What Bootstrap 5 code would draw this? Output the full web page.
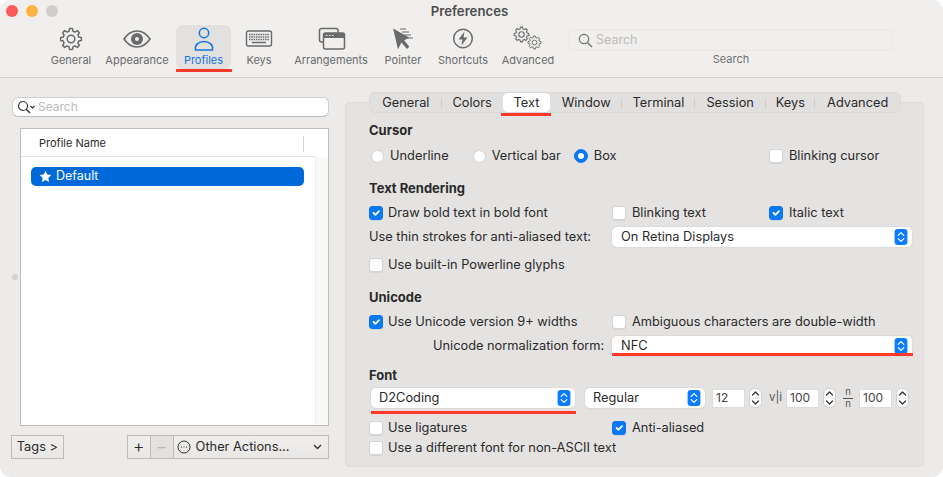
<!DOCTYPE html>
<html lang="en"><head><meta charset="utf-8"><title>Preferences</title>
<link rel="stylesheet" href="https://cdn.jsdelivr.net/npm/bootstrap@5.3.0/dist/css/bootstrap.min.css">
<style>
html,body{height:477px;overflow:hidden;background:#fff;}
body{font-family:Inter,"Liberation Sans",sans-serif;font-size:12.8px;color:#2a2a2a;line-height:1;}
.win{width:943px;height:477px;background:#ecebe9;border-radius:11px;overflow:hidden;}
.tbar{height:78px;background:#f0efed;border-bottom:1px solid #d2d1cf;}
.tophead{height:21px;}
.lights{width:70px;padding:5px 0 0 6px;gap:8px;}
.dot{width:12px;height:12px;border-radius:50%;display:block;}
.d1{background:#fb5b5c;}.d2{background:#fdb243;}.d3{background:#cfcecc;}
.wtitle{width:799px;text-align:center;font-weight:600;font-size:13.2px;color:#4c4c4c;padding-top:5px;}
.tools{padding-left:44px;margin-top:4px;}
.tool{height:44px;color:#6a6a6a;font-size:11px;position:relative;}
.tool svg{height:26px;width:30px;display:block;margin-top:1px;}
.tool span{margin-top:3px;white-space:nowrap;}
.t1{width:54px}.t2{width:78px}.t3{width:55px;background:#e2e1df;border-radius:6px;color:#1473e6;}.t4{width:56px}.t5{width:88px}.t6{width:56px}.t7{width:64px}.t8{width:66px}
.redmark{position:absolute;background:#fd3a2a;height:3px;}
.rm1{left:0;right:-1px;top:44px;}
.tsearch{margin-left:8px;width:324px;color:#707070;font-size:11px;margin-top:4px;}
.tfield{height:22px;border:1px solid #e7e6e4;border-radius:5px;width:100%;padding-left:8px;gap:3px;color:#bdbcbb;font-size:12.5px;flex:none;}
.tsearch>span{margin-top:3px;}
.mainarea{height:399px;}
.leftp{width:345px;padding:19px 0 0 12px;}
.lsearch{width:317px;height:20px;background:#fff;border:1px solid #d0cfcd;border-bottom-color:#bdbcbb;border-radius:6px;padding-left:4px;color:#bcbbbb;font-size:12px;gap:2px;}
.lrow{display:flex;position:relative;}
.ptable{width:309px;height:298px;margin:11px 0 0 8px;background:#fff;border:1px solid #bfbebc;}
.phead{height:28px;border-bottom:1px solid #e3e2e0;padding:2px 0 0 18px;font-size:11px;color:#2a2a2a;width:294px;}
.phsep{margin-left:auto;margin-right:11px;width:1px;height:16px;background:#d8d7d5;}
.pscroll{width:14px;background:#f8f8f7;border-left:1px solid #ececec;margin-top:28px;}
.pleft{width:294px;}
.prow{height:19px;margin:10px 0 0 10px;width:273px;background:#0069d9;color:#fff;border-radius:5px;padding-left:8px;gap:4px;font-size:12.5px;}
.grip{position:absolute;left:12px;top:196px;width:6px;height:6px;border-radius:50%;background:#d2d1cf;}
.lbtns{margin-top:9px;height:24px;margin-left:-1px;width:318px;}
.mbtn{height:24px;border:1px solid #bdbcba;background:linear-gradient(#f0efed,#e8e7e5);color:#2a2a2a;font-size:12.8px;border-radius:0;padding:0;line-height:1;}
.bt{width:53px;}.bp{width:24px;margin-left:63px;font-size:18px;font-weight:300;}.bm{width:23px;border-left:0;color:#b5b4b2;font-size:18px;font-weight:300;background:#e2e1df;}
.ba{width:156px;border-left:0;padding:0 6px 0 3px;gap:5px;justify-content:flex-start;}
.rightp{width:579px;position:relative;padding-top:14px;}
.segs{position:relative;z-index:1;margin-left:24px;width:532px;height:21px;background:#e1e0de;border:1px solid #dad9d7;border-radius:6px;margin-bottom:-11px;color:#2a2a2a;}
.sg{height:100%;position:relative;padding-top:1px;}
.s1{width:72px}.s2{width:61px}.s3{width:48px;background:#fff;border-radius:5px;}.s4{width:72px}.s5{width:73px}.s6{width:71px}.s7{width:50px}.s8{width:85px}
.sep::after{content:"";position:absolute;right:0;top:5px;height:11px;width:1px;background:#cfcecc;}
.rm2{left:-2px;right:-1px;top:20px;}
.pane{height:365px;background:#e4e3e1;border:1px solid #dddcda;border-radius:4px;padding:18px 0 0 23px;}
.rw{display:flex;align-items:center;height:20px;position:relative;white-space:nowrap;}
.hd{font-weight:700;font-size:13px;padding-bottom:2px;}
.form-check-input.cb{width:14px;height:14px;margin:0;background-color:#fff;border:1px solid #d5d4d2;border-radius:3px;flex:none;float:none;box-shadow:0 1px 1px rgba(0,0,0,.06);}
.form-check-input.cb:checked{background-color:#0a78f5;border-color:#0a78f5;}
.form-check-input.rd{width:13px;height:13px;margin:0;background-color:#fff;border:1px solid #d5d4d2;flex:none;float:none;}
.form-check-input.rd:checked{width:14px;height:14px;background-color:#0a78f5;border-color:#0a78f5;}
.ck{display:flex;align-items:center;gap:5px;}
.col2{position:absolute;left:243px;}
.col3{position:absolute;left:400px;}
.ck.col2,.ck.col3{gap:6px;}
.rad{display:flex;align-items:center;gap:6px;}
.slct{background:#fff;border-radius:5px;height:20px;display:flex;align-items:center;justify-content:space-between;padding:0 3px 0 8px;box-shadow:0 0 0 1px #dcdbd9,0 1px 1px rgba(0,0,0,.15);position:relative;flex:none;}
.slct.col2{position:absolute;padding-left:9px;}
.slct svg{display:block;}
.w300{width:300px;}.w204{width:204px;}.w120{width:120px;}
.num{width:33px;height:19px;background:#fff;border:1px solid #dddcda;display:flex;align-items:center;padding-left:3px;font-size:12px;color:#444;flex:none;}
.stp{width:13px;height:20px;margin-left:4px;flex:none;display:block;}
.frac{display:flex;flex-direction:column;align-items:center;width:10px;font-size:9.500px;line-height:11.600px;color:#555;flex:none;background:linear-gradient(#555,#555) center/100% 1px no-repeat;}
.frac i{font-style:normal;}
.vi{color:#555;font-size:11.500px;width:12px;text-align:center;flex:none;}
.rm3{left:0;right:-1px;top:17px;}
.rm4{left:0;right:-1px;top:23px;}
.r2{margin-top:2px}.r4{margin-top:4px}.r5{margin-top:5px}.r8{margin-top:8px}.r10{margin-top:10px}.r13{margin-top:13px}
.c1r{margin-left:2px}.c2r{margin-left:24px}.c3r{margin-left:13px}
.ulabel{margin-left:64px}
.ms-02{margin-left:2px}.regm{margin-left:10px}.n1{margin-left:7px}.vi{margin-left:7px}.n2{margin-left:5px}.frac{margin-left:7px}.n3{margin-left:6px}
</style></head><body>
<svg width="0" height="0" class="position-absolute"><defs>
<symbol id="gear" viewBox="0 0 24 24"><polygon fill="none" stroke="currentColor" stroke-width="1.500" stroke-linejoin="round" points="9.93,4.27 10.54,1.6 13.46,1.6 14.07,4.27 16,5.07 18.32,3.61 20.39,5.68 18.93,8 19.73,9.93 22.4,10.54 22.4,13.46 19.73,14.07 18.93,16 20.39,18.32 18.32,20.39 16,18.93 14.07,19.73 13.46,22.4 10.54,22.4 9.93,19.73 8,18.93 5.68,20.39 3.61,18.32 5.07,16 4.27,14.07 1.6,13.46 1.6,10.54 4.27,9.93 5.07,8 3.61,5.68 5.68,3.61 8,5.07"/><circle cx="12" cy="12" r="3.800" fill="none" stroke="currentColor" stroke-width="1.500"/></symbol>
<symbol id="updown" viewBox="0 0 16 20"><rect width="16" height="20" rx="4" fill="#0a7cff"/><path d="M4.500 8 8 4.500 11.500 8M4.500 12 8 15.500 11.500 12" fill="none" stroke="#fff" stroke-width="1.500" stroke-linecap="round" stroke-linejoin="round"/></symbol>
<symbol id="stepper" viewBox="0 0 13 20"><rect x=".5" y=".5" width="12" height="19" rx="5" fill="#fff" stroke="#cfcecd"/><path d="M.5 10h12" stroke="#e4e3e1"/><path d="M3.500 7 6.500 4l3 3M3.500 13l3 3 3-3" fill="none" stroke="#333" stroke-width="1.300" stroke-linecap="round" stroke-linejoin="round"/></symbol>
</defs></svg>
<div class="win d-flex flex-column">
 <div class="tbar">
  <div class="d-flex tophead">
   <div class="d-flex lights"><span class="dot d1"></span><span class="dot d2"></span><span class="dot d3"></span></div>
   <div class="wtitle">Preferences</div>
  </div>
  <div class="d-flex tools">
   <div class="tool t1 d-flex flex-column align-items-center"><svg viewBox="0 0 30 26"><use href="#gear" x="3" y="1" width="24" height="24"/></svg><span>General</span></div>
   <div class="tool t2 d-flex flex-column align-items-center"><svg viewBox="0 0 30 26"><path d="M2 13C6 7 10 5 15 5s9 2 13 8c-4 6-8 8-13 8S6 19 2 13Z" fill="none" stroke="currentColor" stroke-width="1.600"/><circle cx="15" cy="13" r="6" fill="currentColor"/><circle cx="15" cy="13" r="2" fill="#f0efed"/></svg><span>Appearance</span></div>
   <div class="tool t3 d-flex flex-column align-items-center"><svg viewBox="0 0 30 26"><circle cx="15" cy="7" r="4.700" fill="none" stroke="currentColor" stroke-width="1.500"/><path d="M6.500 24c-1-5 3-8.500 8.500-8.500S24.500 19 23.500 24Z" fill="none" stroke="currentColor" stroke-width="1.500" stroke-linejoin="round"/></svg><span>Profiles</span><i class="redmark rm1"></i></div>
   <div class="tool t4 d-flex flex-column align-items-center"><svg viewBox="0 0 30 26"><rect x="2.500" y="5" width="25" height="15" rx="2" fill="none" stroke="currentColor" stroke-width="1.400"/><path d="M5 8.500h20M5 11h20M5 13.500h20" stroke="currentColor" stroke-width="1.500" stroke-dasharray="1.500 .8"/><path d="M8 16.500h14" stroke="currentColor" stroke-width="1.500"/></svg><span>Keys</span></div>
   <div class="tool t5 d-flex flex-column align-items-center"><svg viewBox="0 0 30 26"><path d="M7 16H5.500A2 2 0 0 1 3.500 14V4.500A2 2 0 0 1 5.500 2.500H20A2 2 0 0 1 22 4.500V7" fill="none" stroke="currentColor" stroke-width="1.500"/><rect x="7.500" y="7" width="21" height="16" rx="2" fill="none" stroke="currentColor" stroke-width="1.500"/><path d="M7.500 9a2 2 0 0 1 2-2h17a2 2 0 0 1 2 2v3h-21Z" fill="currentColor"/><path d="M10 9.500h1.500M13 9.500h1.500M16 9.500h1.500" stroke="#f0efed"/></svg><span>Arrangements</span></div>
   <div class="tool t6 d-flex flex-column align-items-center"><svg viewBox="0 0 30 26"><path d="M6 2l3 21 4-6.500 5 7 2.500-2-4.500-7 5.500-2Z" transform="rotate(-5 12 12)" fill="currentColor"/><path d="M12 3h6M14 6h7M16 9h7M19 12h6" stroke="currentColor" stroke-width="1"/></svg><span>Pointer</span></div>
   <div class="tool t7 d-flex flex-column align-items-center"><svg viewBox="0 0 30 26"><circle cx="15" cy="12.500" r="9.300" fill="none" stroke="currentColor" stroke-width="1.500"/><path d="M16.500 5.500 10.500 13.500h4l-1 6 6-8h-4Z" fill="currentColor"/></svg><span>Shortcuts</span></div>
   <div class="tool t8 d-flex flex-column align-items-center"><svg viewBox="0 0 30 26"><use href="#gear" x="0" y="0" width="17" height="17"/><use href="#gear" x="14" y="9" width="15" height="15"/></svg><span>Advanced</span></div>
   <div class="tsearch d-flex flex-column align-items-center">
    <div class="tfield d-flex align-items-center"><svg width="15" height="15" viewBox="0 0 15 15"><circle cx="6" cy="6" r="4.700" fill="none" stroke="#777" stroke-width="1.300"/><path d="M9.500 9.500 14 14" stroke="#777" stroke-width="1.500"/></svg>Search</div>
    <span>Search</span>
   </div>
  </div>
 </div>
 <div class="d-flex mainarea">
  <div class="leftp position-relative">
   <i class="grip"></i>
   <div class="lsearch d-flex align-items-center"><svg width="19" height="14" viewBox="0 0 19 14"><circle cx="6" cy="6" r="4.500" fill="none" stroke="#333" stroke-width="1.200"/><path d="M9.200 9.200 13 13" stroke="#333" stroke-width="1.400"/><path d="M13.500 6l2 2 2-2" fill="none" stroke="#333" stroke-width="1.200"/></svg>Search</div>
   <div class="ptable lrow">
    <div class="pleft">
     <div class="phead d-flex align-items-center">Profile Name<i class="phsep"></i></div>
     <div class="prow d-flex align-items-center"><svg width="13" height="13" viewBox="0 0 24 24"><path d="M12 1.500l3.200 7 7.600.9-5.600 5.200 1.500 7.500L12 18.300l-6.700 3.800 1.500-7.500L1.200 9.400l7.600-.9Z" fill="#fff"/></svg>Default</div>
    </div>
    <div class="pscroll flex-fill"></div>
   </div>
   <div class="lbtns d-flex">
    <button class="btn mbtn bt">Tags &gt;</button>
    <button class="btn mbtn bp d-flex align-items-center justify-content-center">+</button>
    <button class="btn mbtn bm d-flex align-items-center justify-content-center">&minus;</button>
    <button class="btn mbtn ba d-flex align-items-center"><svg width="14" height="14" viewBox="0 0 14 14"><circle cx="7" cy="7" r="6" fill="none" stroke="#333" stroke-width="1"/><path d="M4 7h1M6.500 7h1M9 7h1" stroke="#333"/></svg>Other Actions...<svg class="ms-auto" width="9" height="6" viewBox="0 0 9 6"><path d="M1 1l3.500 3.500L8 1" fill="none" stroke="#333" stroke-width="1.400"/></svg></button>
   </div>
  </div>
  <div class="rightp">
   <div class="segs d-flex">
    <div class="sg s1 sep d-flex align-items-center justify-content-center">General</div>
    <div class="sg s2 d-flex align-items-center justify-content-center">Colors</div>
    <div class="sg s3 d-flex align-items-center justify-content-center">Text<i class="redmark rm2"></i></div>
    <div class="sg s4 sep d-flex align-items-center justify-content-center">Window</div>
    <div class="sg s5 sep d-flex align-items-center justify-content-center">Terminal</div>
    <div class="sg s6 sep d-flex align-items-center justify-content-center">Session</div>
    <div class="sg s7 sep d-flex align-items-center justify-content-center">Keys</div>
    <div class="sg s8 d-flex align-items-center justify-content-center">Advanced</div>
   </div>
   <div class="pane">
    <div class="rw hd">Cursor</div>
    <div class="rw r5"><label class="rad c1r"><input class="form-check-input rd" type="radio" name="c">Underline</label><label class="rad c2r"><input class="form-check-input rd" type="radio" name="c">Vertical bar</label><label class="rad c3r"><input class="form-check-input rd" type="radio" name="c" checked>Box</label><label class="ck col3"><input class="form-check-input cb" type="checkbox">Blinking cursor</label></div>
    <div class="rw hd r13">Text Rendering</div>
    <div class="rw r4"><label class="ck"><input class="form-check-input cb" type="checkbox" checked>Draw bold text in bold font</label><label class="ck col2"><input class="form-check-input cb" type="checkbox">Blinking text</label><label class="ck col3"><input class="form-check-input cb" type="checkbox" checked>Italic text</label></div>
    <div class="rw r4">Use thin strokes for anti-aliased text:<div class="slct w300 col2">On Retina Displays<svg width="16" height="16"><use href="#updown" width="16" height="16"/></svg></div></div>
    <div class="rw r8"><label class="ck"><input class="form-check-input cb" type="checkbox">Use built-in Powerline glyphs</label></div>
    <div class="rw hd r13">Unicode</div>
    <div class="rw r4"><label class="ck"><input class="form-check-input cb" type="checkbox" checked>Use Unicode version 9+ widths</label><label class="ck col2"><input class="form-check-input cb" type="checkbox">Ambiguous characters are double-width</label></div>
    <div class="rw r4"><span class="ulabel">Unicode normalization form:</span><div class="slct w300 col2">NFC<svg width="16" height="16"><use href="#updown" width="16" height="16"/></svg><i class="redmark rm3"></i></div></div>
    <div class="rw hd r10">Font</div>
    <div class="rw r2"><div class="slct w204 ms-02">D2Coding<svg width="16" height="16"><use href="#updown" width="16" height="16"/></svg><i class="redmark rm4"></i></div><div class="slct w120 regm">Regular<svg width="16" height="16"><use href="#updown" width="16" height="16"/></svg></div><div class="num n1">12</div><svg class="stp"><use href="#stepper" width="13" height="20"/></svg><span class="vi">v|i</span><div class="num n2">100</div><svg class="stp"><use href="#stepper" width="13" height="20"/></svg><span class="frac"><b class="fw-normal">n</b><i>n</i></span><div class="num n3">100</div><svg class="stp"><use href="#stepper" width="13" height="20"/></svg></div>
    <div class="rw r10"><label class="ck"><input class="form-check-input cb" type="checkbox">Use ligatures</label><label class="ck col2"><input class="form-check-input cb" type="checkbox" checked>Anti-aliased</label></div>
    <div class="rw"><label class="ck"><input class="form-check-input cb" type="checkbox">Use a different font for non-ASCII text</label></div>
   </div>
  </div>
 </div>
</div>
</body></html>
